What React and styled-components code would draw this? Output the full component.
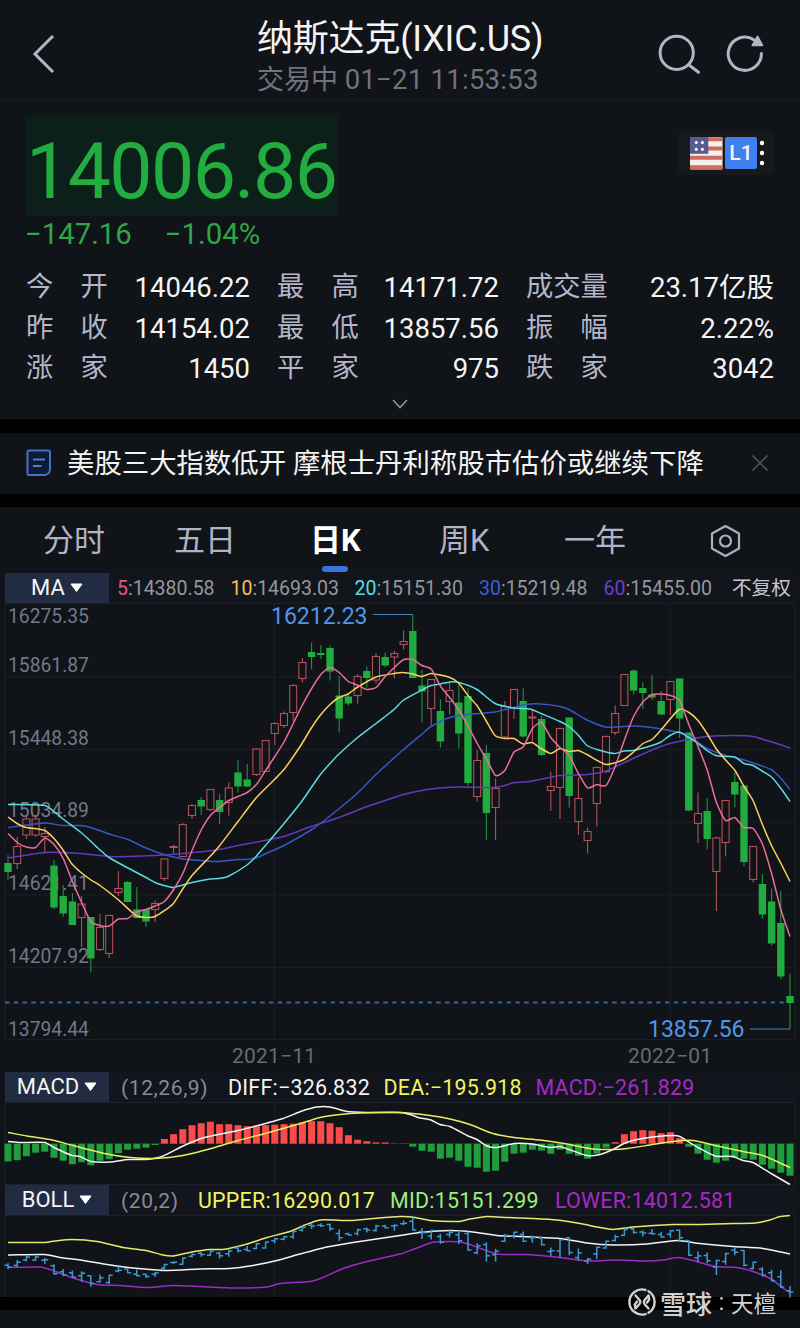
import React from "react";
import styled, { createGlobalStyle } from "styled-components";

//* Data *//

const STATS = [
  ["今　开", "14046.22"],
  ["最　高", "14171.72"],
  ["成交量", "23.17亿股"],
  ["昨　收", "14154.02"],
  ["最　低", "13857.56"],
  ["振　幅", "2.22%"],
  ["涨　家", "1450"],
  ["平　家", "975"],
  ["跌　家", "3042"],
];

const TABS = [
  { label: "分时", width: 131 },
  { label: "五日", width: 136 },
  { label: "日K", width: 129, active: true },
  { label: "周K", width: 125 },
  { label: "一年", width: 145 },
];

const MA_ITEMS = [
  { key: "5", value: "14380.58", color: "#e8567f", width: 113.5 },
  { key: "10", value: "14693.03", color: "#f5c452", width: 124 },
  { key: "20", value: "15151.30", color: "#56dfe6", width: 124.5 },
  { key: "30", value: "15219.48", color: "#3c5fd6", width: 124.5 },
  { key: "60", value: "15455.00", color: "#6a3fd0", width: 128.5 },
];

const PRICE_LABELS = [
  ["16275.35", 616],
  ["15861.87", 665],
  ["15448.38", 738],
  ["15034.89", 810.5],
  ["14621.41", 883.5],
  ["14207.92", 956.5],
  ["13794.44", 1029],
];

// g = falling, r = rising; then high, body top, body bottom, low
const CANDLES = `g 855 863 872 880|r 837 846.5 863.5 869|r 815 819 835 839|r 815 819 835 837|r 827 833.5 836.5 852
g 860 865.5 907.5 909|g 885 896 913.5 917|g 893 901.5 925 925|r 896 904 917.5 947|g 917 917 958.5 972
r 914 927.5 949.5 951|r 915 915.5 953.5 958|r 871 888.5 892.5 896|g 881 882 902 902|g 887 909.5 918 918.5
g 909 909.5 921.5 927|r 900.5 903.5 909.5 922|r 858.5 859 878.5 881|r 845 846.5 847.5 853|r 823 824.5 856.5 857
r 804 805.5 815.5 819|g 797 800 806.5 815|r 789.5 789.5 809.5 811|g 794 800 812 824|r 782.5 788 802.5 815.5
g 760 772.5 786.5 792.5|g 764 779.5 786.5 787|r 748 749 774.5 776|r 740 740.5 771.5 772|r 721.7 723.5 733.5 745
r 711.5 713.5 725.5 728|r 684 685.5 712.5 721|r 658 662.5 678.5 682.5|g 642.5 652 657 669|g 645 653 655 659
g 645.5 648 671.5 680.5|g 676 695.5 718.5 732.5|g 694 696.5 703.5 705.5|r 674 676.5 695.5 703.5|g 666.5 671 678 687.5
r 653 656.5 680 683.5|g 652.5 657 665.5 667.5|r 650.5 653.5 657 678.5|r 630.5 641.5 644.5 649.5|g 614.5 631 678 678
g 670 685.5 691.5 722.5|r 679 679.5 708.5 725|g 699.5 711 741.5 747.5|r 681.5 690.5 701.5 714.5|g 684.5 702.5 733.5 748.5
g 688.5 696 783 785.5|r 750 760.5 796.5 801.5|g 745 753 813 840|r 778.5 788.5 807.5 840|r 701 706.5 737 738
r 689 689.5 708.5 719|g 688.5 701 736.5 737.5|r 710 717 718 741.5|g 716 719 755 756|r 771.5 786.5 790.5 811
r 727.5 728.5 787.5 819|g 717.5 717.5 796 807.5|r 777.5 798.5 821.5 835|r 827.5 831.5 840.5 853.5|r 766.5 767.5 803.5 826.5
r 735.5 736.5 771.5 773.5|r 705.5 713.5 732.5 735|r 674.5 674.5 705.5 706|g 669.5 670.5 690.5 694.5|g 682.5 688 693 709
g 675 694.5 697.5 700|g 691 701 714.5 715|r 681 681.5 699.5 715|g 678 678.5 718.5 738|g 732 732.5 810.5 811
r 792.5 813.5 823.5 843|g 798 811 839 849.5|r 836.5 838 871.5 911|r 800 800.5 842.5 856.5|g 772.5 782 794.5 807.5
g 785 785.5 862 866.5|r 846 846.5 879.5 882.5|g 874 884 914.5 919|g 888.5 901.5 943.5 945.5|g 891 923 976.5 979
g 973.5 996 1003 1029`
  .split(/[|\n]/)
  .map((row) => {
    const [dir, ...v] = row.split(" ");
    const [high, top, bottom, low] = v.map(Number);
    return { up: dir === "r", high, top, bottom, low };
  });

const STEP = 9.2;
const xAt = (i) => 8 + i * STEP;

const MA5 = [
  833.5, 842.5, 847, 847.5, 838, 844.5, 858.5, 881.5, 902.5, 921.5, 925.5, 926,
  919, 918.5, 912, 909.5, 906, 901.5, 889.5, 873.5, 850.5, 830, 815.5, 807.5,
  800.5, 796.5, 792.5, 784.5, 770.5, 756.5, 742, 723.5, 705, 688.5, 674.5,
  667.5, 672.5, 681.5, 685, 689.5, 687.5, 676.5, 667.5, 659.5, 659.5, 665.5,
  669, 686, 697.5, 710, 726, 743.5, 759, 775.5, 770.5, 752, 747, 728.5, 722.5,
  737.5, 747.5, 755.5, 773.5, 788, 784.5, 785.5, 766.5, 740, 716.5, 702, 694.5,
  694, 695.5, 700.5, 724.5, 746.5, 770, 802.5, 820.5, 817.5, 827.5, 828.5, 844,
  873.5, 909.5, 936.5,
].map((y, i) => [xAt(i), y]);

const points = (text) => text.split(" ").map((p) => p.split(",").map(Number));

const MA10 = points(
  "8,817 17,823.5 26,827.5 35,828.5 45,830.5 54,838.5 63,850 72,864 81,872.5 91,880 100,885.5 118,899.5 136,915.5 146,917.5 155,916.5 173,904 183,888.5 192,875.5 210,856.5 219,846.5 238,821.5 256,798 275,779 284,769.5 293,757 302,743.5 311,728.5 320,715.5 330,704.5 339,697.5 348,694 357,687.5 376,677 394,673.5 403,672.5 413,674 422,676.5 431,673.5 450,677.5 459,683.5 468,695.5 477,705.5 486,720.5 495,735.5 505,738.5 514,738.5 523,744 532,742.5 541,748.5 551,753.5 560,748.5 569,751.5 578,750.5 587,754.5 606,764.5 624,759.5 633,752.5 643,743.5 652,739.5 661,730 679,709.5 689,712.5 698,720.5 707,733.5 716,748.5 726,760.5 735,770.5 744,786.5 753,800.5 762,823.5 772,846.5 781,863.5 790,881.5"
);
const MA20 = points(
  "8,804.5 45,805.5 54,811.5 63,819 81,832.5 91,841.5 100,850 109,857.5 128,868 146,877.5 155,882.5 164,885.5 173,887.5 192,882.5 210,879 219,878.5 228,876.5 247,865 256,856.5 265,846 284,823.5 302,801 320,775 330,763.5 339,754 357,738 376,723.5 394,709.5 403,700.5 422,690 431,685.5 440,684 450,682 459,682.5 477,689.5 495,703.5 514,708 530,709 541,713.5 560,721.5 569,726.5 578,735 587,745.5 597,749.5 606,752 615,753.5 624,751 633,750.5 652,745.5 661,742 670,735.5 679,732 689,737.5 698,743.5 707,750.5 716,755.5 726,756.5 735,757 744,763.5 753,765.5 762,771 772,777.5 781,788.5 790,801.5"
);
const MA30 = points(
  "8,827.5 26,825 45,823 63,825.5 81,825.5 91,827.5 109,834 128,839.5 146,848 164,854.5 183,859 201,860.5 219,861.5 238,859.5 247,859.5 256,858 265,854 284,845.5 311,830 330,816 357,793.5 376,774.5 403,750 422,734 431,726.5 450,717.5 468,714.5 495,712 514,707.5 525,704.5 541,704 560,706.5 569,709.5 587,720 606,727 624,726.5 633,726 652,727.5 679,732.5 689,736 707,748.5 726,755.5 744,760 762,766 772,770 781,778.5 790,789.5"
);
const MA60 = points(
  "8,858 45,852.5 81,853.5 109,856.5 128,856.5 155,855.5 183,853.5 219,849.5 238,845.5 265,840.5 284,836.5 311,826.5 339,817.5 367,806.5 394,797.5 403,794.5 431,789 459,787 495,787.5 505,785.5 514,782.5 530,781.5 560,775.5 587,774.5 606,771 633,758.5 652,750 670,743.5 689,739.5 707,736.5 735,735.5 753,736.5 772,742 790,748"
);

const MACD_BARS = [
  -17.7, -16.5, -12.5, -9, -8, -14, -17, -20.5, -18.5, -21.5, -17, -15.5, -9.5,
  -6, -5, -4, -1.3, 4.7, 9.5, 14.5, 18.5, 20.5, 22, 19.5, 19.5, 18.5, 17.5,
  17.5, 18.5, 19, 19.5, 20, 21.3, 22.5, 22.5, 20.5, 16.5, 8.5, 4, 2.5, 1.3, 1.3,
  0.3, 0.3, -3, -7, -8, -15, -14, -17, -23, -24, -28, -27, -18, -10, -9, -6, -7,
  -10, -6, -10, -12, -15, -10, -4, 1.5, 9.5, 12.5, 13.5, 13, 10.5, 11.5, 5.5,
  -3, -10, -16, -19, -17, -14, -15, -16, -21, -25, -29, -32,
];

const DIFF = points(
  "8,1141.5 20,1142.5 45,1142.5 54,1147.5 72,1155.5 80,1156.5 91,1161.5 110,1162 128,1159.5 146,1159.5 162,1156.5 183,1146 201,1138.5 213,1135.5 238,1130.5 256,1126 283,1118.5 302,1111 317,1107 330,1107 347,1111.5 367,1112.5 400,1112.5 410,1114.5 420,1118 431,1120 440,1124.5 450,1126.5 468,1136 477,1139.5 487,1146 497,1147.5 514,1143.5 532,1144 551,1147.5 560,1146.5 587,1155.5 600,1154.5 613,1149.5 624,1143.5 637,1139.5 657,1136.5 673,1135.5 680,1136.5 688,1141.5 698,1147.5 715,1156 733,1156.5 743,1160.5 753,1162.5 772,1174 790,1184.5"
);
const DEA = points(
  "8,1132.5 27,1136 50,1139.5 73,1145.5 107,1154 130,1157.5 155,1158.5 183,1155.5 213,1148 238,1140.5 267,1133 297,1124.5 320,1117.5 340,1114.5 360,1113 400,1112.5 430,1115.5 450,1119 470,1124.5 493,1133.5 514,1137.5 540,1140 567,1144 593,1149 613,1149.5 627,1148.5 650,1145 673,1141.5 693,1140.5 715,1145.5 743,1151.5 763,1155.5 790,1167.5"
);

const UPPER = points(
  "8,1242.5 45,1242.5 55,1241 72,1239.5 97,1241.5 123,1247.5 146,1250.5 163,1255 173,1256 192,1252 210,1249.5 223,1249.5 247,1244 267,1237.5 290,1231.5 305,1225 320,1220 350,1220.5 373,1218.5 400,1216.5 412,1217 430,1220.5 458,1221.5 470,1219 487,1216.5 507,1217.5 533,1218.5 557,1220 580,1223.5 600,1227.5 613,1229.5 633,1227 673,1224.5 700,1224.5 733,1223.5 755,1223 770,1220 780,1216.5 790,1215.5"
);
const MID = points(
  "8,1255 45,1254.5 60,1257.5 80,1260 107,1264.5 133,1268 167,1270.5 200,1269 230,1268.5 253,1265.5 277,1260.5 300,1254 327,1247 353,1242.5 400,1235.5 420,1232.5 450,1230.5 473,1232 497,1235.5 533,1237 560,1238.5 587,1243 613,1245 647,1244 677,1240.5 700,1243.5 733,1246.5 763,1248.5 790,1254"
);
const LOWER = points(
  "8,1267.5 40,1267 53,1270.5 70,1277 97,1284.5 120,1285.5 147,1287.5 173,1285.5 200,1286.5 233,1288 267,1287 280,1283.5 310,1281.5 323,1277.5 343,1268.5 367,1261.5 400,1254 413,1249.5 432,1242.5 450,1241.5 463,1242.5 478,1247.5 497,1254 527,1254.5 560,1257.5 587,1261 617,1260 647,1261 663,1260 678,1257.5 693,1260.5 715,1266.5 737,1267.5 753,1271.5 772,1279.5 782,1287.5 790,1292.5"
);

// light Catmull-Rom smoothing through the points
const curve = (pts) =>
  pts.reduce((d, p, i) => {
    if (i === 0) return `M${p[0]} ${p[1]}`;
    const a = pts[i - 2] || pts[i - 1];
    const b = pts[i - 1];
    const n = pts[i + 1] || p;
    const k = (p[0] - b[0]) / 5;
    const s1 = (p[1] - a[1]) / (p[0] - a[0]);
    const s2 = (n[1] - b[1]) / (n[0] - b[0]);
    return `${d}C${b[0] + k} ${b[1] + s1 * k} ${p[0] - k} ${p[1] - s2 * k} ${p[0]} ${p[1]}`;
  }, "");

const bollY = (y) => 1218 + (y - 614.5) * 0.1906;

//* Charts *//

const Line = ({ pts, color }) => (
  <path d={curve(pts)} fill="none" stroke={color} strokeWidth="1.5" strokeLinejoin="round" />
);

const CandleChart = () => (
  <Chart viewBox="0 603 800 437" $height={437}>
    <g stroke="#1a1e28" strokeWidth="1">
      {[603.5, 677, 749.5, 822, 895, 967.5, 1039.5].map((y) => (
        <path key={y} d={`M5 ${y}H795`} />
      ))}
      {[5, 274.5, 670, 795].map((x) => (
        <path key={x} d={`M${x} 603V1040`} />
      ))}
    </g>
    {PRICE_LABELS.map(([label, y]) => (
      <AxisLabel key={label} x="8" y={y + 6.5}>
        {label}
      </AxisLabel>
    ))}
    {CANDLES.map((c, i) => {
      const x = xAt(i);
      return c.up ? (
        <g key={i} stroke="#b05257" fill="none" strokeWidth="1.1">
          <path d={`M${x} ${c.high}V${c.top}M${x} ${c.bottom}V${c.low}`} />
          <rect x={x - 3.5} y={c.top} width="7" height={c.bottom - c.top} />
        </g>
      ) : (
        <g key={i}>
          <path d={`M${x} ${c.high}V${c.low}`} stroke="#25923c" strokeWidth="1.1" />
          <rect
            x={x - 3.7}
            y={c.top}
            width="7.4"
            height={c.bottom - c.top}
            fill="#21ac3f"
          />
        </g>
      );
    })}
    <Line pts={MA60} color="#6439bd" />
    <Line pts={MA30} color="#3558c4" />
    <Line pts={MA20} color="#59dce2" />
    <Line pts={MA10} color="#fbcf5d" />
    <Line pts={MA5} color="#ee6c99" />
    <path d="M5 1002.5H786" stroke="#33659f" strokeWidth="1.8" strokeDasharray="4.4 4.4" />
    <path d="M373 614.5H412.8M750 1029H790" stroke="#4484bd" strokeWidth="1.2" />
    <PeakLabel x="271" y="623.5">
      16212.23
    </PeakLabel>
    <PeakLabel x="648" y="1037">
      13857.56
    </PeakLabel>
  </Chart>
);

const MacdChart = () => (
  <Chart viewBox="0 1102 800 83" $height={83}>
    <path
      d="M5 1102.5H795M5 1143.5H795M5 1184.5H795M5 1102V1185M274.5 1102V1185M670 1102V1185M795 1102V1185"
      stroke="#1c202a"
    />
    {MACD_BARS.map((v, i) => (
      <rect
        key={i}
        x={xAt(i) - 3.5}
        y={v > 0 ? 1143.7 - v : 1143.7}
        width="7"
        height={Math.abs(v)}
        fill={v > 0 ? "#f94b4a" : "#1f9f3b"}
      />
    ))}
    <Line pts={DIFF} color="#f3f3f3" />
    <Line pts={DEA} color="#e9ee5c" />
  </Chart>
);

const BollChart = () => (
  <Chart viewBox="0 1215 800 82" $height={82}>
    <path
      d="M5 1215.5H795M5 1215V1297M274.5 1215V1297M670 1215V1297M795 1215V1297"
      stroke="#1a1e28"
    />
    <Line pts={UPPER} color="#e6ea6d" />
    <Line pts={MID} color="#f3f3f3" />
    <Line pts={LOWER} color="#9c2cc4" />
    {CANDLES.map((c, i) => {
      const x = xAt(i);
      const open = bollY(c.up ? c.bottom : c.top);
      const close = bollY(c.up ? c.top : c.bottom);
      return (
        <path
          key={i}
          d={`M${x} ${bollY(c.high) - 0.5}V${bollY(c.low) + 0.5}M${x - 3.5} ${open}H${x}M${x} ${close}H${x + 3.5}`}
          stroke="#3a9bd6"
          strokeWidth="1.5"
        />
      );
    })}
  </Chart>
);

const Flag = () => (
  <svg width="33" height="33" viewBox="0 0 33 33">
    <rect width="32.5" height="32.5" rx="1.5" fill="#f6efee" />
    <path
      d="M0 2.2H32.5M0 11.5H32.5M0 20.8H32.5M0 30.2H32.5"
      stroke="#cd6a63"
      strokeWidth="4"
    />
    <rect width="18.3" height="16.8" fill="#575b8e" />
    <g fill="#fff">
      <circle cx="6.3" cy="5.4" r="1.5" />
      <circle cx="12.4" cy="5.4" r="1.5" />
      <circle cx="6.3" cy="12.2" r="1.5" />
      <circle cx="12.4" cy="12.2" r="1.5" />
    </g>
  </svg>
);

const Picker = ({ children }) => (
  <PickerBox>
    {children}
    <svg width="13" height="10" viewBox="0 0 13 10">
      <path d="M1 1H12L6.5 8.5Z" fill="#fff" stroke="#fff" strokeLinejoin="round" />
    </svg>
  </PickerBox>
);

const App = () => {
  return (
    <Page>
      <GlobalStyle />

      <Header>
        <svg width="24" height="42" viewBox="0 0 24 42">
          <path d="M21 3L3 21L21 39" fill="none" stroke="#b2b4c8" strokeWidth="3" />
        </svg>
        <Heading>
          <Title>纳斯达克(IXIC.US)</Title>
          <SubTitle>
            交易中 <SubTime>01−21 11:53:53</SubTime>
          </SubTitle>
        </Heading>
        <svg width="108" height="44" viewBox="657 32 108 44">
          <g fill="none" stroke="#b2b4c8" strokeWidth="3">
            <circle cx="676.7" cy="52.8" r="16.6" />
            <path d="M689 65L698.5 72.3" strokeLinecap="round" />
            <path d="M753.500 39.600A16.600 16.600 0 1 0 761.400 53.500" strokeLinecap="round" />
          </g>
          <path d="M757.500 36.500L762.300 45.300H752.500Z" fill="#b2b4c8" stroke="#b2b4c8" strokeWidth="1.800" strokeLinejoin="round" />
        </svg>
      </Header>

      <Quote>
        <QuoteTop>
          <Price>14006.86</Price>
          <Badges>
            <Flag />
            <Level>L1</Level>
            <svg width="6" height="26" viewBox="0 0 6 26" fill="#fff">
              <circle cx="3" cy="3" r="2.2" />
              <circle cx="3" cy="13" r="2.2" />
              <circle cx="3" cy="23" r="2.2" />
            </svg>
          </Badges>
        </QuoteTop>
        <Changes>
          <span>−147.16</span>
          <span>−1.04%</span>
        </Changes>
        <Stats>
          {STATS.map(([label, value]) => (
            <Stat key={label + value}>
              <StatLabel>{label}</StatLabel>
              <StatValue>{value}</StatValue>
            </Stat>
          ))}
        </Stats>
        <Expand>
          <svg width="18" height="12" viewBox="0 0 18 12">
            <path d="M2 2L9 9.5L16 2" fill="none" stroke="#8b8d9b" strokeWidth="1.8" />
          </svg>
        </Expand>
      </Quote>

      <Divider $height={14} />

      <News>
        <svg width="26" height="28" viewBox="0 0 26 28">
          <path
            d="M1.5 3Q1.5 1.5 3 1.5H22.5Q24 1.5 24 3V20.5Q23.5 25.5 18.5 26H3Q1.5 26 1.5 24.5Z"
            fill="#0e1b33"
            stroke="#4372c8"
            strokeWidth="2"
          />
          <path d="M7 10.5H19M7 17H15.5" stroke="#4c7fdc" strokeWidth="2" />
        </svg>
        <NewsText>美股三大指数低开 摩根士丹利称股市估价或继续下降</NewsText>
        <svg width="18" height="18" viewBox="0 0 18 18">
          <path d="M1.5 1.5L16.5 16.5M16.5 1.5L1.5 16.5" stroke="#4d4f57" strokeWidth="1.7" />
        </svg>
      </News>

      <Divider $height={13} />

      <Tabs>
        {TABS.map((tab) => (
          <Tab key={tab.label} $width={tab.width} $active={tab.active}>
            {tab.label}
          </Tab>
        ))}
        <svg width="32" height="34" viewBox="0 0 32 34">
          <g fill="none" stroke="#aeb0c2" strokeWidth="2.2">
            <path d="M16.5 2L30 9.5V24.5L16.5 32L3 24.5V9.5Z" strokeLinejoin="round" />
            <circle cx="16.5" cy="17" r="5.5" />
          </g>
        </svg>
      </Tabs>

      <Bar>
        <Picker>MA</Picker>
        {MA_ITEMS.map((item) => (
          <MaItem key={item.key} $width={item.width}>
            <MaKey $color={item.color}>{item.key}</MaKey>:{item.value}
          </MaItem>
        ))}
        <Adjust>不复权</Adjust>
      </Bar>
      <CandleChart />

      <Dates>
        <span>2021−11</span>
        <span>2022−01</span>
      </Dates>

      <Bar>
        <Picker>MACD</Picker>
        <Param $width={111}>(12,26,9)</Param>
        <Value $width={155.5} $color="#f4f4f4">DIFF:−326.832</Value>
        <Value $width={152} $color="#f0f45e">DEA:−195.918</Value>
        <Value $width={160} $color="#a927c9">MACD:−261.829</Value>
      </Bar>
      <MacdChart />

      <Bar>
        <Picker>BOLL</Picker>
        <Param $width={81}>(20,2)</Param>
        <Value $width={192} $color="#f0f45e">UPPER:16290.017</Value>
        <Value $width={165} $color="#9bf07a">MID:15151.299</Value>
        <Value $width={184} $color="#a927c9">LOWER:14012.581</Value>
      </Bar>
      <BollChart />

      <Divider $height={13} />

      <Watermark>
        <svg width="28" height="28" viewBox="0 0 28 28">
          <g fill="none" stroke="#d0d1d3" strokeWidth="2.4" strokeLinecap="round">
            <path d="M17.5 1.9A12.600 12.600 0 1 0 17.500 26.100" />
            <path d="M20.500 3.200A12.600 12.600 0 0 1 20.500 24.800" />
            <path d="M7.500 7.500L12 12.500Q13 14 11.500 16L7.500 20.500M7.500 20.500L6.800 16.500L9 13.500" />
            <path d="M20.500 7.500L16.300 12.500Q15.300 14 16.500 16L20.500 20.500M20.500 7.500L21.200 11.500L19 14.500" />
          </g>
        </svg>
        <Brand>雪球</Brand>
        <Colon>:</Colon>
        <Author>天檀</Author>
      </Watermark>
    </Page>
  );
};

export default App;

//* Styled Components *//

const GlobalStyle = createGlobalStyle`
  body {
    margin: 0;
    background: #101317;
  }
`;

const Page = styled.main`
  position: relative;
  width: 800px;
  height: 1328px;
  overflow: hidden;
  background: #101317;
  color: #f4f4f5;
  font-family: Roboto, "Noto Sans CJK SC", sans-serif;
`;

const Header = styled.header`
  display: flex;
  align-items: center;
  box-sizing: border-box;
  height: 101px;
  padding: 7px 35px 0 32px;
  border-bottom: 1px solid #1c1e23;
`;

const Heading = styled.div`
  flex: 1;
  padding-left: 201px;
  margin-top: 11px;
  white-space: nowrap;
`;

const Title = styled.h1`
  margin: 0;
  font-size: 36px;
  font-weight: 400;
  line-height: 42px;
  letter-spacing: -0.2px;
`;

const SubTitle = styled.p`
  margin: 0;
  font-size: 27px;
  line-height: 40px;
  color: #70727d;
`;

const SubTime = styled.span`
  font-size: 27.5px;
  letter-spacing: 0.25px;
`;

const Quote = styled.section`
  box-sizing: border-box;
  height: 318px;
  padding: 15px 25px 0;
`;

const QuoteTop = styled.div`
  display: flex;
  justify-content: space-between;
`;

const Price = styled.div`
  box-sizing: border-box;
  width: 313px;
  padding-left: 1px;
  height: 100px;
  line-height: 112px;
  font-size: 77px;
  letter-spacing: -1.6px;
  white-space: nowrap;
  background: #0a2019;
  color: #23ac3f;
`;

const Badges = styled.div`
  display: flex;
  align-items: center;
  gap: 2px;
  box-sizing: border-box;
  height: 44px;
  margin-top: 15px;
  padding: 0 10px 0 12px;
  border-radius: 5px;
  background: #17191d;
`;

const Level = styled.span`
  width: 32px;
  height: 32px;
  border-radius: 2px;
  background: #3e80f0;
  font-size: 21px;
  font-weight: 500;
  line-height: 33px;
  text-align: center;
`;

const Changes = styled.div`
  display: flex;
  gap: 33px;
  height: 51px;
  font-size: 29.3px;
  line-height: 37px;
  color: #2fa548;
`;

const Stats = styled.div`
  display: grid;
  grid-template-columns: 224px 222px 248px;
  column-gap: 27px;
  margin-left: 1px;
`;

const Stat = styled.div`
  display: flex;
  justify-content: space-between;
  height: 40.5px;
  line-height: 41.5px;
  white-space: nowrap;
`;

const StatLabel = styled.span`
  font-size: 27.3px;
  color: #b4b5c9;
`;

const StatValue = styled.span`
  font-size: 27.5px;
`;

const Expand = styled.div`
  display: flex;
  justify-content: center;
  padding: 9px 1px 0 0;
`;

const Divider = styled.div`
  height: ${(props) => props.$height}px;
  background: #000;
`;

const News = styled.section`
  display: flex;
  align-items: center;
  height: 60px;
  padding: 0 31px 1px 26px;
`;

const NewsText = styled.p`
  flex: 1;
  margin: 2px 0 0 15px;
  font-size: 27.4px;
  line-height: 40px;
  white-space: nowrap;
`;

const Tabs = styled.nav`
  display: flex;
  align-items: center;
  height: 66px;
  padding: 2px 0 0 43px;
  box-sizing: border-box;
`;

const Tab = styled.div`
  position: relative;
  width: ${(props) => props.$width}px;
  font-size: 31px;
  line-height: 64px;
  font-weight: ${(props) => (props.$active ? 700 : 400)};
  color: ${(props) => (props.$active ? "#fff" : "#b1b3c6")};

  &::after {
    content: "";
    display: ${(props) => (props.$active ? "block" : "none")};
    position: absolute;
    left: 12px;
    bottom: 1px;
    width: 26px;
    height: 6px;
    border-radius: 3px;
    background: #3b73dc;
  }
`;

const Bar = styled.div`
  display: flex;
  height: 30px;
  margin: 0 5px;
  line-height: 32px;
  background: #12151b;
  white-space: nowrap;
`;

const PickerBox = styled.div`
  display: flex;
  align-items: center;
  justify-content: center;
  gap: 5px;
  width: 104px;
  margin-right: 8px;
  background: #212c43;
  font-size: 22px;
`;

const MaItem = styled.span`
  width: ${(props) => props.$width}px;
  font-size: 19.5px;
  color: #96979d;
`;

const MaKey = styled.span`
  color: ${(props) => props.$color};
`;

const Adjust = styled.span`
  font-size: 19.6px;
  color: #c6c7d3;
`;

const Param = styled.span`
  width: ${(props) => props.$width}px;
  padding-left: 4px;
  box-sizing: border-box;
  font-size: 21px;
  letter-spacing: 0.6px;
  color: #898b95;
`;

const Value = styled.span`
  width: ${(props) => props.$width}px;
  font-size: 21.4px;
  letter-spacing: 0.25px;
  color: ${(props) => props.$color};
`;

const Chart = styled.svg`
  display: block;
  width: 800px;
  height: ${(props) => props.$height}px;
  overflow: visible;
`;

const AxisLabel = styled.text`
  font-size: 19.3px;
  fill: #74778a;
`;

const PeakLabel = styled.text`
  font-size: 23px;
  fill: #4f96ee;
`;

const Dates = styled.div`
  display: grid;
  grid-template-columns: 396px auto;
  height: 32px;
  padding-left: 232px;
  font-size: 21px;
  line-height: 33px;
  letter-spacing: 0.2px;
  color: #676a78;
`;

const Watermark = styled.div`
  position: absolute;
  left: 628px;
  top: 1284px;
  display: flex;
  align-items: center;
  height: 36px;
  color: #d0d1d3;
`;

const Brand = styled.span`
  margin-left: 4px;
  font-size: 26px;
  font-weight: 500;
`;

const Colon = styled.span`
  width: 19px;
  text-align: center;
  font-size: 24px;
`;

const Author = styled.span`
  font-size: 22.5px;
`;
